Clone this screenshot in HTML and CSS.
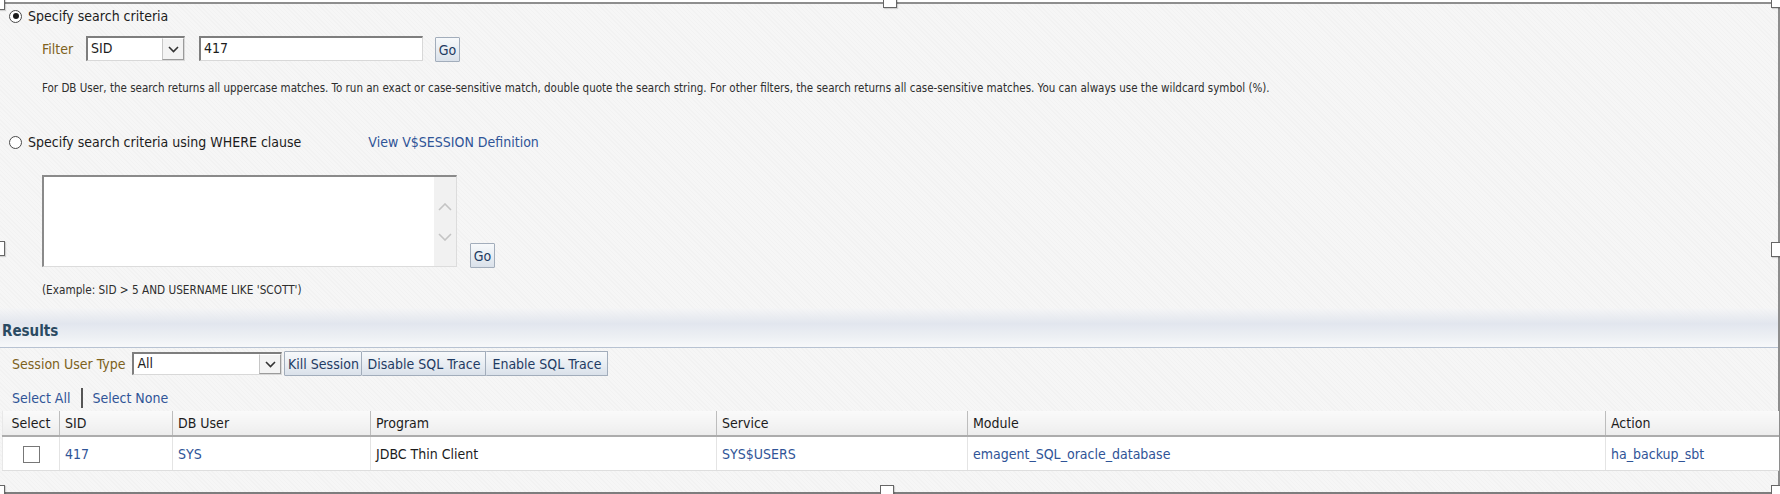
FILE: index.html
```html
<!DOCTYPE html>
<html lang="en">
<head>
    <meta charset="UTF-8">
    <meta name="viewport" content="width=device-width, initial-scale=1.0">
    <title>Search Sessions</title>
    <link rel="stylesheet" href="styles.css">
</head>
<body>
    <div class="frame">
        <div class="criteria">
            <div class="radio-line">
                <span class="radio checked"></span>
                <span>Specify search criteria</span>
            </div>

            <div class="filter-row">
                <span class="label">Filter</span>
                <div class="combo combo-filter">
                    <span class="combo-text">SID</span>
                    <span class="combo-btn">
                        <svg width="11" height="7" viewBox="0 0 11 7"><polyline points="1,1 5.5,5.5 10,1" fill="none" stroke="#333" stroke-width="1.6"/></svg>
                    </span>
                </div>
                <div class="text-input">417</div>
                <button class="btn go">Go</button>
            </div>

            <p class="hint">For DB User, the search returns all uppercase matches. To run an exact or case-sensitive match, double quote the search string. For other filters, the search returns all case-sensitive matches. You can always use the wildcard symbol (%).</p>

            <div class="radio-line where-line">
                <span class="radio"></span>
                <span>Specify search criteria using WHERE clause</span>
                <a href="#" class="link def-link">View V$SESSION Definition</a>
            </div>

            <div class="where-row">
                <div class="textarea">
                    <div class="scroll">
                        <svg width="14" height="8" viewBox="0 0 14 8"><polyline points="1,7 7,1 13,7" fill="none" stroke="#c4c4c4" stroke-width="1.6"/></svg>
                        <svg width="14" height="8" viewBox="0 0 14 8"><polyline points="1,1 7,7 13,1" fill="none" stroke="#c4c4c4" stroke-width="1.6"/></svg>
                    </div>
                </div>
                <button class="btn go go-where">Go</button>
            </div>

            <p class="example">(Example: SID &gt; 5 AND USERNAME LIKE 'SCOTT')</p>
        </div>

        <div class="results-bar">
            <h2 class="results-title">Results</h2>
        </div>

        <div class="toolbar">
            <span class="label">Session User Type</span>
            <div class="combo combo-type">
                <span class="combo-text">All</span>
                <span class="combo-btn">
                    <svg width="11" height="7" viewBox="0 0 11 7"><polyline points="1,1 5.5,5.5 10,1" fill="none" stroke="#333" stroke-width="1.6"/></svg>
                </span>
            </div>
            <div class="btn-group">
                <button class="btn tb-btn kill">Kill Session</button>
                <button class="btn tb-btn disable">Disable SQL Trace</button>
                <button class="btn tb-btn enable">Enable SQL Trace</button>
            </div>
        </div>

        <div class="select-links">
            <a href="#" class="link">Select All</a>
            <span class="sep"></span>
            <a href="#" class="link">Select None</a>
        </div>

        <table class="grid">
            <colgroup>
                <col style="width: 57px">
                <col style="width: 113px">
                <col style="width: 198px">
                <col style="width: 346px">
                <col style="width: 251px">
                <col style="width: 638px">
                <col style="width: 173px">
            </colgroup>
            <thead>
                <tr>
                    <th class="col-select">Select</th>
                    <th>SID</th>
                    <th>DB User</th>
                    <th>Program</th>
                    <th>Service</th>
                    <th>Module</th>
                    <th>Action</th>
                </tr>
            </thead>
            <tbody>
                <tr>
                    <td class="col-select"><span class="checkbox"></span></td>
                    <td><a href="#" class="link">417</a></td>
                    <td><a href="#" class="link">SYS</a></td>
                    <td>JDBC Thin Client</td>
                    <td><a href="#" class="link">SYS$USERS</a></td>
                    <td><a href="#" class="link">emagent_SQL_oracle_database</a></td>
                    <td><a href="#" class="link">ha_backup_sbt</a></td>
                </tr>
            </tbody>
        </table>
    </div>

    <!-- resize handles of the selected frame -->
    <span class="handle h-tl"></span>
    <span class="handle h-tm"></span>
    <span class="handle h-tr"></span>
    <span class="handle h-ml"></span>
    <span class="handle h-mr"></span>
    <span class="handle h-bl"></span>
    <span class="handle h-bm"></span>
    <span class="handle h-br"></span>
</body>
</html>
```
FILE: styles.css
```css
body {
    margin: 0;
    padding: 0;
    position: relative;
    height: 494px;
    overflow: hidden;
    background: #fff;
    font-family: "DejaVu Sans Condensed", "DejaVu Sans", sans-serif;
    font-size: 14px;
    color: #1c1c1c;
}

.frame {
    box-sizing: border-box;
    height: 492px;
    margin-top: 2px;
    border-top: 2px solid #8e8e8e;
    border-right: 2px solid #8e8e8e;
    border-bottom: 2px solid #7d7d7d;
    background-color: #f4f4f4;
    background-image: repeating-linear-gradient(45deg, #f6f6f6 0, #f6f6f6 2px, #f2f2f2 2px, #f2f2f2 3px);
}

.link {
    color: #2f5497;
    text-decoration: none;
}

.label {
    color: #7d6120;
}

/* 搜索条件 */
.criteria {
    padding-left: 9px;
}

.radio-line {
    display: flex;
    align-items: center;
    height: 24px;
}

.radio {
    box-sizing: border-box;
    width: 13px;
    height: 13px;
    margin-right: 6px;
    border: 1px solid #4a4a4a;
    border-radius: 50%;
    background: #fff;
    position: relative;
}

.radio.checked::after {
    content: "";
    position: absolute;
    left: 2.5px;
    top: 2.5px;
    width: 6px;
    height: 6px;
    border-radius: 50%;
    background: #1a1a1a;
}

.filter-row {
    display: flex;
    align-items: center;
    margin-top: 8px;
    padding-left: 33px;
    height: 25px;
}

.filter-row .label {
    margin-right: 13px;
}

.combo {
    box-sizing: border-box;
    display: flex;
    align-items: stretch;
    background: #fff;
    border-top: 2px solid #7e7e7e;
    border-left: 2px solid #7e7e7e;
    border-right: 1px solid #d8d8d8;
    border-bottom: 1px solid #d8d8d8;
}

.combo-text {
    flex: 1;
    padding-left: 3px;
    line-height: 20px;
}

.combo-btn {
    box-sizing: border-box;
    width: 22px;
    display: flex;
    align-items: center;
    justify-content: center;
    background: #f3f3f3;
    border: 1px solid #9b9b9b;
    border-top-color: #fff;
    border-left-color: #c6c6c6;
}

.combo-filter {
    width: 99px;
    height: 25px;
}

.text-input {
    box-sizing: border-box;
    width: 224px;
    height: 25px;
    margin-left: 14px;
    padding-left: 3px;
    line-height: 21px;
    background: #fff;
    border-top: 2px solid #7e7e7e;
    border-left: 2px solid #7e7e7e;
    border-right: 1px solid #d8d8d8;
    border-bottom: 1px solid #d8d8d8;
}

.btn {
    box-sizing: border-box;
    margin: 0;
    padding: 0 3px;
    font-family: inherit;
    font-size: 14px;
    color: #1f3b63;
    background: linear-gradient(#f7f9fb, #e9eef3 50%, #dae1ea);
    border: 1px solid #a2adbb;
    border-radius: 1px;
    cursor: pointer;
}

.go {
    width: 25px;
    height: 25px;
    padding: 0;
}

.filter-row .go {
    margin-left: 12px;
    margin-top: 2px;
}

.hint {
    margin: 20px 0 0 33px;
    font-size: 11.5px;
    line-height: 14px;
    color: #2e2e2e;
}

.where-line {
    margin-top: 35px;
}

.def-link {
    margin-left: 67px;
}

.where-row {
    display: flex;
    align-items: flex-end;
    margin-top: 21px;
    padding-left: 33px;
}

.textarea {
    box-sizing: border-box;
    width: 415px;
    height: 92px;
    display: flex;
    justify-content: flex-end;
    background: #fff;
    border-top: 2px solid #8a8a8a;
    border-left: 2px solid #8a8a8a;
    border-right: 1px solid #dcdcdc;
    border-bottom: 1px solid #dcdcdc;
}

.scroll {
    width: 22px;
    display: flex;
    flex-direction: column;
    align-items: center;
    justify-content: center;
    gap: 22px;
    background: #f1f1f1;
}

.go-where {
    margin-left: 13px;
    margin-bottom: -1px;
}

.example {
    margin: 16px 0 0 33px;
    font-size: 11.7px;
    line-height: 14px;
    color: #2e2e2e;
}

/* 结果区域 */
.results-bar {
    margin-top: 11px;
    height: 39px;
    border-bottom: 1px solid #b7c2d2;
    background: linear-gradient(rgba(244,245,247,0.4), #e2e6ee 40%, #edf0f4 75%, #f7f8fa);
}

.results-title {
    margin: 0;
    padding: 14px 0 0 2px;
    font-size: 15px;
    line-height: 18px;
    font-weight: bold;
    color: #2a4a62;
}

.toolbar {
    display: flex;
    align-items: center;
    margin-top: 3px;
    padding-left: 12px;
    height: 25px;
}

.toolbar .label {
    margin-right: 7px;
}

.combo-type {
    width: 150px;
    height: 23px;
}

.combo-type .combo-text {
    line-height: 18px;
}

.btn-group {
    display: flex;
    margin-left: 2px;
}

.tb-btn {
    height: 25px;
    padding: 0;
}

.tb-btn + .tb-btn {
    border-left: none;
}

.kill { width: 78px; }
.disable { width: 124px; }
.enable { width: 122px; }

.select-links {
    display: flex;
    align-items: center;
    margin-top: 11px;
    padding-left: 12px;
    height: 22px;
}

.sep {
    width: 2px;
    height: 20px;
    margin: 0 9px 0 11px;
    background: #555;
}

.grid {
    margin: 2px 0 0 2px;
    width: 1776px;
    table-layout: fixed;
    border-collapse: collapse;
}

.grid th {
    height: 24px;
    padding: 0 0 0 5px;
    text-align: left;
    font-weight: normal;
    color: #1c1c1c;
    background: linear-gradient(#fafafa, #ededed);
    border-left: 1px solid #bdbdbd;
    border-bottom: 2px solid #acacac;
}

.grid td {
    height: 33px;
    padding: 0 0 0 5px;
    background: #fff;
    border-left: 1px solid #e4e4e4;
    border-bottom: 1px solid #dedede;
}

.grid th:first-child,
.grid td:first-child {
    border-left: 1px solid #e8e8e8;
}

.grid .col-select {
    padding: 0;
    text-align: center;
}

.checkbox {
    display: inline-block;
    box-sizing: border-box;
    width: 17px;
    height: 17px;
    margin-top: 4px;
    border: 1px solid #777;
    background: #fff;
}

/* 选中框手柄 */
.handle {
    position: absolute;
    box-sizing: border-box;
    width: 14px;
    height: 15px;
    background: #fff;
    border: 1px solid #666;
    box-shadow: 1px 1px 1px rgba(0,0,0,0.15);
}

.h-tl { left: -9px; top: -5px; }
.h-tm { left: 883px; top: -7px; }
.h-tr { left: 1771px; top: -7px; }
.h-ml { left: -9px; top: 241px; }
.h-mr { left: 1771px; top: 242px; }
.h-bl { left: -9px; top: 485px; }
.h-bm { left: 880px; top: 485px; }
.h-br { left: 1771px; top: 485px; }
```
